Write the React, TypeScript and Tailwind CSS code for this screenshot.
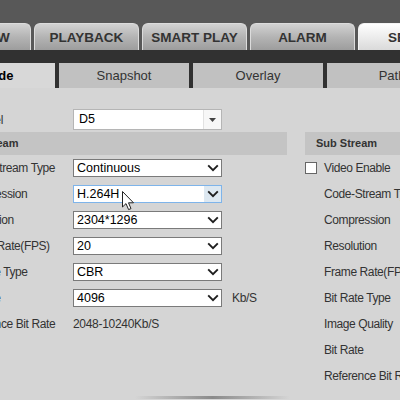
import React from "react";

const mainTabs = ["PREVIEW", "PLAYBACK", "SMART PLAY", "ALARM", "SETUP"];
const subTabs = ["Encode", "Snapshot", "Overlay", "Path"];

function Chevron() {
  return (
    <svg width="12" height="8" viewBox="0 0 12 8" fill="none">
      <path d="M1.2 1.4 L6 6.2 L10.8 1.4" stroke="#1e1e1e" strokeWidth="1.9" />
    </svg>
  );
}

function Select({ value, focus }: { value: string; focus?: boolean }) {
  return (
    <div
      className={`flex h-[18px] w-[149px] shrink-0 items-center border bg-white ${
        focus ? "border-[#7eb4ea]" : "border-[#7a7a7a]"
      }`}
    >
      <span className="flex-1 pl-[3px] text-[12.5px] leading-none text-black">{value}</span>
      <span
        className={`flex h-full w-[17px] items-center justify-center ${focus ? "bg-[#dde8f1]" : ""}`}
      >
        <Chevron />
      </span>
    </div>
  );
}

function Row({ label, children }: { label: string; children?: React.ReactNode }) {
  return (
    <div className="flex h-[26px] items-center pl-[19px]">
      <span className="w-[112px] shrink-0 whitespace-nowrap text-[12px] tracking-[-0.4px] text-[#333]">
        {label}
      </span>
      {children}
    </div>
  );
}

export default function App() {
  return (
    <div className="relative h-[400px] w-[400px] overflow-hidden bg-[#d5d5d5] font-['Liberation_Sans',Arial,sans-serif]">
      {/* top bar */}
      <div className="h-[23px] bg-[#585858]" />
      <div className="ml-[-74px] flex h-[27px] gap-[3px] bg-[#585858]">
        {mainTabs.map((t) => (
          <div
            key={t}
            className={`flex w-[105px] shrink-0 items-center justify-center whitespace-nowrap rounded-t-[6px] border border-b-0 pt-[3px] text-[13.5px] font-bold text-[#333] ${
              t === "SETUP"
                ? "border-[#f4f4f4] bg-linear-to-b from-white to-[#dadada]"
                : "border-[#dcdcdc] bg-linear-to-b from-[#d2d2d2] via-[#b4b4b4] to-[#9d9d9d]"
            }`}
          >
            {t}
          </div>
        ))}
      </div>
      <div className="h-[13px] bg-[#313131]" />
      <div className="ml-[-75px] flex h-[25px] gap-[4px] bg-[#313131]">
        {subTabs.map((t, i) => (
          <div
            key={t}
            className={`flex w-[130px] shrink-0 items-center justify-center text-[13px] ${
              i === 0 ? "bg-[#d8d8d8] font-bold text-black" : "bg-[#c1c1c1] text-[#333]"
            }`}
          >
            {t}
          </div>
        ))}
      </div>

      {/* content */}
      <div className="pt-[21px]">
        <div className="ml-[-58px] flex h-[21px] items-center pl-[19px]">
          <span className="w-[112px] shrink-0 text-[12px] tracking-[-0.4px] text-[#333]">Channel</span>
          <div className="flex h-[21px] w-[149px] shrink-0 items-center border border-[#b5b5b5] bg-white">
            <span className="flex-1 pl-[5px] text-[12.5px] text-black">D5</span>
            <span className="flex h-full w-[18px] items-center justify-center border-l border-[#e2e2e2] bg-[#f7f7f7]">
              <svg width="7" height="4" viewBox="0 0 7 4">
                <path d="M0 0 H7 L3.5 4 Z" fill="#444" />
              </svg>
            </span>
          </div>
        </div>

        <div className="ml-[-58px] mt-[2px] flex gap-[18px]">
          <div className="w-[345px] shrink-0">
            <div className="flex h-[23px] items-center bg-[#c4c4c4] pl-[11px] text-[11px] font-bold text-[#333]">
              Main Stream
            </div>
            <Row label="Code-Stream Type">
              <Select value="Continuous" />
            </Row>
            <Row label="Compression">
              <Select value="H.264H" focus />
            </Row>
            <Row label="Resolution">
              <Select value="2304*1296" />
            </Row>
            <Row label="Frame Rate(FPS)">
              <Select value="20" />
            </Row>
            <Row label="Bit Rate Type">
              <Select value="CBR" />
            </Row>
            <Row label="Bit Rate">
              <Select value="4096" />
              <span className="ml-[10px] text-[12px] tracking-[-0.3px] text-[#333]">Kb/S</span>
            </Row>
            <Row label="Reference Bit Rate">
              <span className="text-[12px] tracking-[-0.3px] text-[#333]">2048-10240Kb/S</span>
            </Row>
          </div>

          <div className="w-[200px] shrink-0">
            <div className="flex h-[23px] items-center bg-[#c4c4c4] pl-[11px] text-[11px] font-bold text-[#333]">
              Sub Stream
            </div>
            <div className="flex h-[26px] items-center">
              <span className="h-[12px] w-[12px] border border-[#666] bg-white" />
              <span className="ml-[7px] text-[12px] tracking-[-0.4px] text-[#333]">Video Enable</span>
            </div>
            {[
              "Code-Stream Type",
              "Compression",
              "Resolution",
              "Frame Rate(FPS)",
              "Bit Rate Type",
              "Image Quality",
              "Bit Rate",
              "Reference Bit Rate",
            ].map((l) => (
              <Row key={l} label={l} />
            ))}
          </div>
        </div>

        <div className="ml-[135px] mt-[7px] h-[3px] w-[155px] bg-linear-to-r from-transparent via-[#8a8a8a] to-transparent" />
      </div>

      {/* mouse cursor */}
      <svg
        className="absolute left-[122px] top-[191px]"
        width="13"
        height="20"
        viewBox="0 0 13 20"
      >
        <path
          d="M0.5 0.5 V16 L4 12.6 L6.6 18.6 L9 17.6 L6.5 11.8 H11.5 Z"
          fill="white"
          stroke="#222"
          strokeWidth="1"
          strokeLinejoin="round"
        />
      </svg>
    </div>
  );
}
